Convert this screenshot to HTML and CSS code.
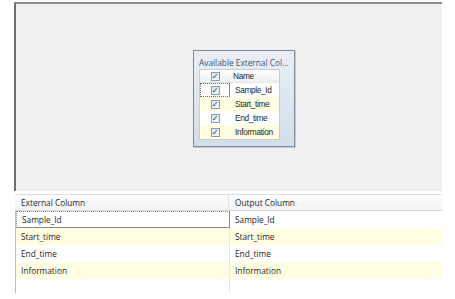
FILE: index.html
```html
<!DOCTYPE html>
<html>
<head>
<meta charset="utf-8">
<link rel="stylesheet" href="styles.css">
</head>
<body>
<div class="designer">
  <div class="table-box">
    <div class="box-title">Available External Col...</div>
    <div class="box-list">
      <div class="brow bhead"><span class="bcheck"><span class="cb">&#10003;</span></span><span class="bname">Name</span></div>
      <div class="brow"><span class="bcheck focus"><span class="cb">&#10003;</span></span><span class="bname">Sample_Id</span></div>
      <div class="brow alt"><span class="bcheck"><span class="cb">&#10003;</span></span><span class="bname">Start_time</span></div>
      <div class="brow"><span class="bcheck"><span class="cb">&#10003;</span></span><span class="bname">End_time</span></div>
      <div class="brow alt"><span class="bcheck"><span class="cb">&#10003;</span></span><span class="bname">Information</span></div>
    </div>
  </div>
</div>
<div class="grid">
  <div class="grow ghead"><div class="gcell">External Column</div><div class="gcell">Output Column</div></div>
  <div class="gbody">
    <div class="grow"><div class="gcell focus">Sample_Id</div><div class="gcell">Sample_Id</div></div>
    <div class="grow alt"><div class="gcell">Start_time</div><div class="gcell">Start_time</div></div>
    <div class="grow"><div class="gcell">End_time</div><div class="gcell">End_time</div></div>
    <div class="grow alt"><div class="gcell">Information</div><div class="gcell">Information</div></div>
    <div class="grow empty"><div class="gcell"></div><div class="gcell"></div></div>
  </div>
</div>
</body>
</html>
```
FILE: styles.css
```css
html, body {
  margin: 0;
  padding: 0;
  background: #ffffff;
  font-family: "Open Sans", "Liberation Sans", sans-serif;
  font-size: 8.3px;
  color: #1e1e1e;
}
.designer {
  box-sizing: border-box;
  margin: 2px 0 0 14px;
  width: 428px;
  height: 189px;
  border-left: 2px solid #6e6e6e;
  border-top: 2px solid #8c8c8c;
  background: #f0f0f0;
  padding: 46px 0 0 177px;
}
.table-box {
  box-sizing: border-box;
  width: 102px;
  height: 97px;
  border: 1px solid #7f8a99;
  background: linear-gradient(#e9eef5, #d3deeb);
  padding: 6px 5px 0 5px;
  box-shadow: 1px 1px 0 #c8ccd2;
}
.box-title {
  color: #3f5470;
  font-size: 8.3px;
  line-height: 11px;
  white-space: nowrap;
  margin: 0 0 1px 0;
}
.box-list {
  box-sizing: border-box;
  width: 81px;
  height: 71px;
  background: #ffffff;
  border: 1px solid #c7ccd4;
  overflow: hidden;
}
.brow {
  display: flex;
  height: 14px;
  align-items: center;
}
.brow.bhead {
  height: 12px;
  background: linear-gradient(#ffffff, #eef0f3);
  border-bottom: 1px solid #e2e4e8;
}
.brow.alt { background: #fffee0; }
.bcheck {
  box-sizing: border-box;
  width: 30px;
  height: 100%;
  display: flex;
  align-items: center;
  justify-content: center;
}
.bcheck.focus {
  border: 1px dotted #6e6e6e;
  border-right: 1px solid #8a8a8a;
  background: #ffffff;
}
.cb {
  box-sizing: border-box;
  width: 9px;
  height: 9px;
  border: 1px solid #8b9bb4;
  background: linear-gradient(#dfe6f1, #f4f6fa);
  color: #26385e;
  font-size: 8px;
  line-height: 7px;
  text-align: center;
  font-family: "DejaVu Sans", sans-serif;
}
.bname {
  padding-left: 5px;
  font-family: "Liberation Sans", Arial, sans-serif;
  font-size: 8.3px;
  letter-spacing: -0.35px;
  white-space: nowrap;
}
.bhead .bname { padding-left: 3px; }
.grid {
  margin: 3px 0 0 15px;
  width: 427px;
}
.grow {
  display: flex;
  height: 17px;
}
.grow.ghead {
  height: 15px;
  background: linear-gradient(#ffffff, #f1f2f4);
  border-top: 1px solid #dcdcdc;
  border-bottom: 1px solid #d7d7d7;
}
.gbody {
  border-left: 1px solid #bdbdbd;
}
.grow.alt { background: #fffee3; }
.grow.empty { height: 14px; }
.gcell {
  box-sizing: border-box;
  flex: 0 0 214px;
  padding-left: 5px;
  display: flex;
  align-items: center;
  border-right: 1px solid #e6e6e6;
  white-space: nowrap;
}
.gcell + .gcell {
  flex: 1 1 auto;
  border-right: none;
}
.ghead .gcell { padding-left: 6px; border-right-color: #e0e0e0; }
.gcell.focus {
  border: 1px solid #8a8a8a;
  border-left-style: dotted;
  border-top-style: dotted;
  padding-left: 5px;
  background: #ffffff;
}
```
